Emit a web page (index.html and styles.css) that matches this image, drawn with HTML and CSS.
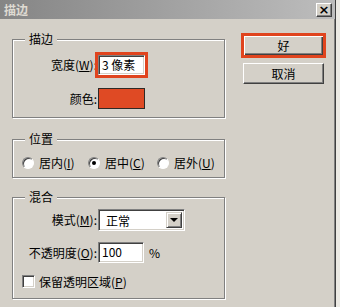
FILE: index.html
```html
<!DOCTYPE html>
<html lang="zh">
<head>
<meta charset="utf-8">
<link rel="stylesheet" href="styles.css">
</head>
<body>
<div class="window">
  <div class="titlebar">
    <span class="title">描边</span>
    <span class="close">×</span>
  </div>
  <div class="content">
    <div class="left">
      <fieldset class="group g1">
        <legend>描边</legend>
        <div class="gbody">
          <div class="row r-width">
            <span class="lab">宽度(<u>W</u>):</span>
            <span class="field hl">3 像素</span>
          </div>
          <div class="row r-color">
            <span class="lab">颜色:</span>
            <span class="swatch"></span>
          </div>
        </div>
      </fieldset>
      <fieldset class="group g2">
        <legend>位置</legend>
        <div class="gbody radios">
          <span class="opt o1"><span class="radio"></span>居内(<u>I</u>)</span>
          <span class="opt o2"><span class="radio on"></span>居中(<u>C</u>)</span>
          <span class="opt o3"><span class="radio"></span>居外(<u>U</u>)</span>
        </div>
      </fieldset>
      <fieldset class="group g3">
        <legend>混合</legend>
        <div class="gbody">
          <div class="row r-mode">
            <span class="lab">模式(<u>M</u>):</span>
            <span class="combo"><span class="ctext">正常</span><span class="cbtn"><span class="arrow"></span></span></span>
          </div>
          <div class="row r-op">
            <span class="lab">不透明度(<u>O</u>):</span>
            <span class="field op">100</span>
            <span class="pct">%</span>
          </div>
          <div class="row r-chk">
            <span class="check"></span>
            <span>保留透明区域(<u>P</u>)</span>
          </div>
        </div>
      </fieldset>
    </div>
    <div class="right">
      <div class="btn default">好</div>
      <div class="btn">取消</div>
    </div>
  </div>
</div>
</body>
</html>
```

FILE: styles.css
```css
* { box-sizing: border-box; }
html, body { margin: 0; padding: 0; }
body {
  width: 340px;
  height: 307px;
  overflow: hidden;
  background: #eceae4;
  font-family: "Noto Sans CJK SC", "Liberation Sans", sans-serif;
  font-size: 12px;
  color: #000;
}
u { text-decoration: underline; text-underline-offset: 1px; }
.window {
  width: 336px;
  height: 307px;
  background: #d4d0c8;
  border-right: 1px solid #404040;
  box-shadow: inset -1px 0 0 #808080;
}
.titlebar {
  height: 19px;
  background: linear-gradient(to right, #858585, #bdbdbd);
  display: flex;
  align-items: center;
  justify-content: space-between;
  padding: 0 2px 0 4px;
}
.title {
  color: #dedad2;
  font-weight: bold;
  font-size: 12px;
  line-height: 14px;
}
.close {
  width: 16px;
  height: 14px;
  background: #d4d0c8;
  border: 1px solid;
  border-color: #fff #404040 #404040 #fff;
  box-shadow: inset -1px -1px 0 #808080;
  font-family: "DejaVu Sans", sans-serif;
  font-weight: bold;
  font-size: 13px;
  line-height: 11px;
  text-align: center;
  margin-right: 1px;
}
.content {
  display: flex;
  padding: 13px 0 0 12px;
}
.left { width: 214px; }
.group {
  margin: 0;
  padding: 0;
  min-width: 0;
  width: 213px;
  border: 1px solid #808080;
  box-shadow: 1px 1px 0 #fff, inset 1px 1px 0 #fff;
}
.group legend {
  margin-left: 12px;
  padding: 0 4px;
  line-height: 14px;
  height: 14px;
  background: #d4d0c8;
}
.g2 { margin-top: 14px; }
.g3 { margin-top: 12px; }
.gbody { display: flex; flex-direction: column; }
.g1 .gbody { padding: 9px 0 8px 0; }
.g2 .gbody { padding: 10px 0 7px 0; }
.g3 .gbody { padding: 5px 0 8px 0; }
.row { display: flex; align-items: center; }
.lab {
  width: 84px;
  text-align: right;
  line-height: 14px;
  margin-right: 1px;
}
.field {
  height: 20px;
  width: 47px;
  background: #fff;
  border: 1px solid;
  border-color: #808080 #fff #fff #808080;
  box-shadow: inset 1px 1px 0 #404040, inset -1px -1px 0 #d4d0c8;
  padding-left: 3px;
  line-height: 17px;
}
.hl { outline: 3px solid #e0441e; }
.r-color { margin-top: 13px; }
.swatch {
  width: 47px;
  height: 21px;
  background: #df4a24;
  border: 1px solid #2e2a26;
}
.radios { flex-direction: row; align-items: center; padding-left: 9px !important; }
.opt { display: flex; align-items: center; line-height: 14px; }
.o1 { width: 66px; }
.o2 { width: 69px; }
.radio {
  width: 12px;
  height: 12px;
  border-radius: 50%;
  background: #fff;
  border: 1px solid;
  border-color: #808080 #fff #fff #808080;
  box-shadow: inset 1px 1px 0 #404040;
  margin-right: 5px;
  display: flex;
  align-items: center;
  justify-content: center;
}
.radio.on::after {
  content: "";
  width: 4px;
  height: 4px;
  border-radius: 50%;
  background: #000;
}
.combo {
  width: 87px;
  height: 22px;
  background: #fff;
  border: 1px solid;
  border-color: #808080 #fff #fff #808080;
  box-shadow: inset 1px 1px 0 #404040, inset -1px -1px 0 #d4d0c8;
  display: flex;
  align-items: stretch;
  padding: 2px;
}
.ctext { flex: 1; padding-left: 5px; line-height: 18px; }
.cbtn {
  width: 16px;
  background: #d4d0c8;
  border: 1px solid;
  border-color: #d4d0c8 #404040 #404040 #d4d0c8;
  box-shadow: inset 1px 1px 0 #fff, inset -1px -1px 0 #808080;
  display: flex;
  align-items: center;
  justify-content: center;
}
.arrow {
  width: 0;
  height: 0;
  border-left: 4px solid transparent;
  border-right: 4px solid transparent;
  border-top: 4px solid #000;
}
.r-op { margin-top: 11px; }
.op { width: 46px; height: 21px; line-height: 18px; }
.pct { margin-left: 5px; line-height: 14px; }
.r-chk { margin-top: 10px; padding-left: 9px; }
.check {
  width: 13px;
  height: 13px;
  background: #fff;
  border: 1px solid;
  border-color: #808080 #fff #fff #808080;
  box-shadow: inset 1px 1px 0 #404040, inset -1px -1px 0 #d4d0c8;
  margin-right: 4px;
}
.right {
  margin-left: 17px;
  margin-top: 3px;
  display: flex;
  flex-direction: column;
}
.btn {
  width: 81px;
  height: 21px;
  background: #d4d0c8;
  border: 1px solid;
  border-color: #fff #404040 #404040 #fff;
  box-shadow: inset -1px -1px 0 #808080;
  text-align: center;
  line-height: 19px;
}
.btn.default {
  border: 1px solid #000;
  box-shadow: inset 1px 1px 0 #fff, inset -1px -1px 0 #404040, inset -2px -2px 0 #808080;
  outline: 3px solid #e0441e;
  outline-offset: -1px;
  margin-bottom: 7px;
}
```
